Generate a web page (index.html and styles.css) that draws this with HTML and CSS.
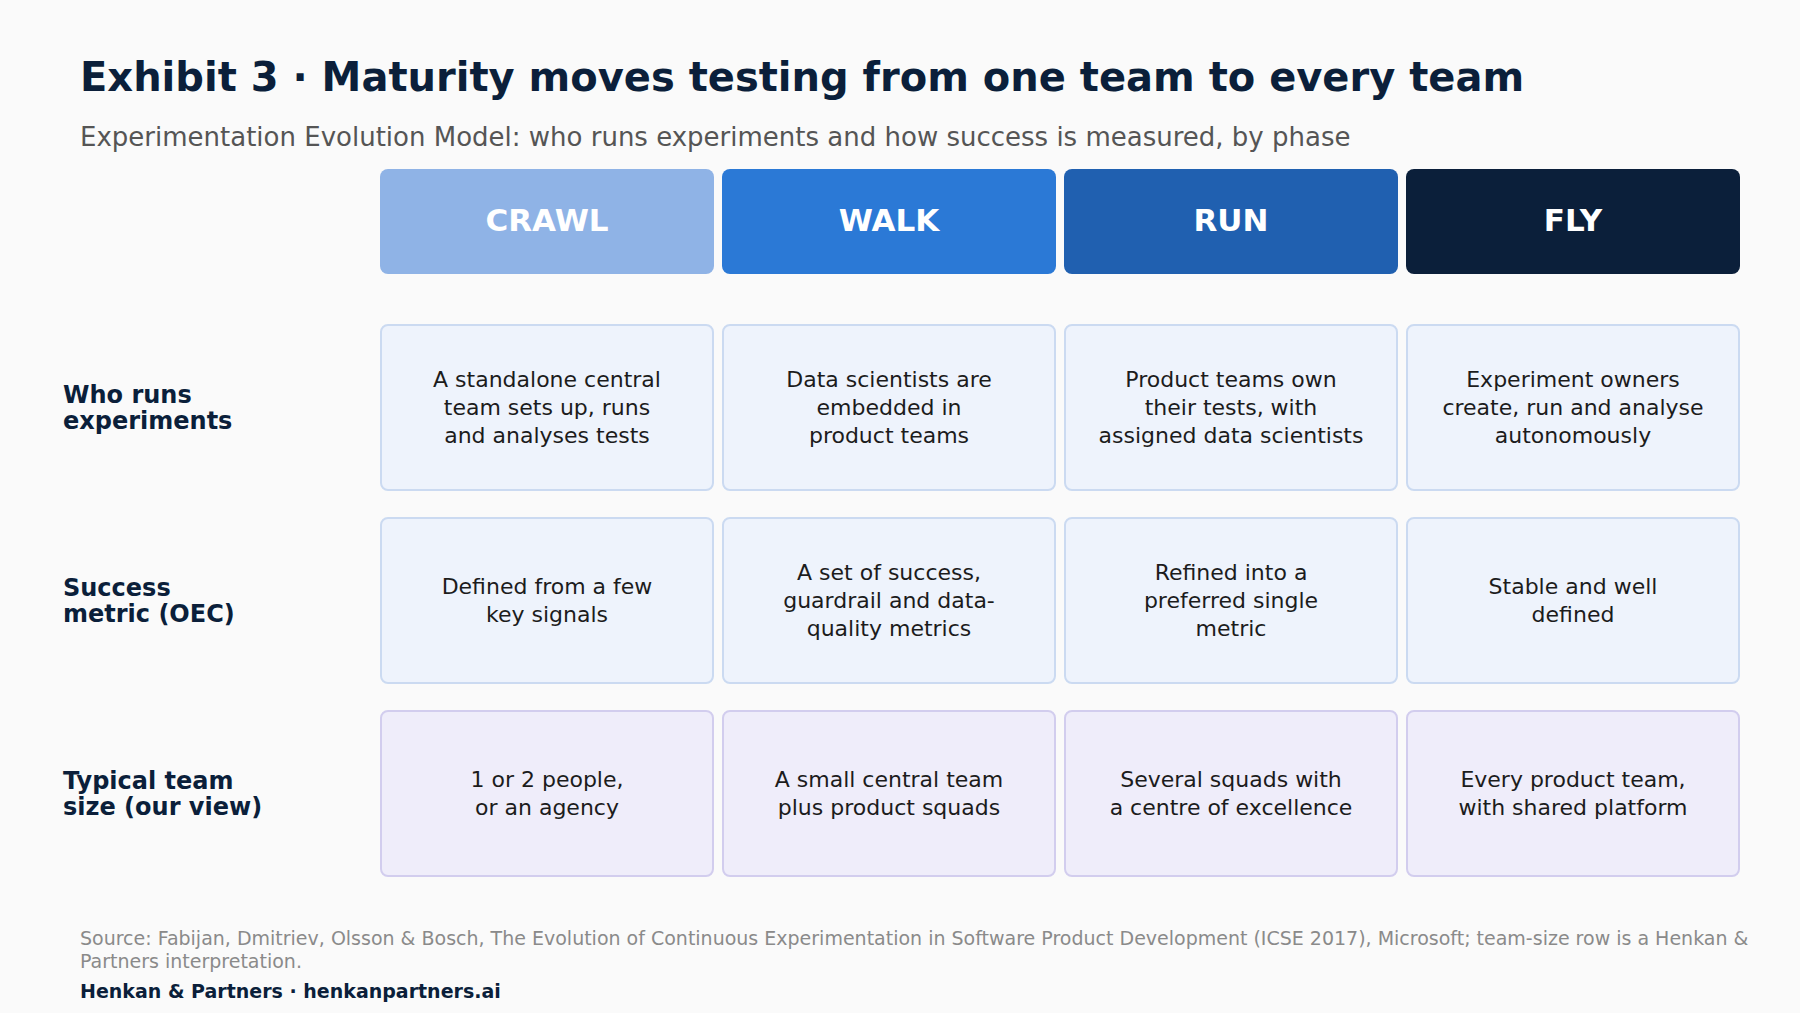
FILE: index.html
```html
<!DOCTYPE html>
<html lang="en">
<head>
    <meta charset="UTF-8">
    <meta name="viewport" content="width=device-width, initial-scale=1.0">
    <link rel="stylesheet" href="styles.css">
</head>
<body>
    <div class="page">
        <h1 class="title">Exhibit 3 · Maturity moves testing from one team to every team</h1>
        <p class="subtitle">Experimentation Evolution Model: who runs experiments and how success is measured, by phase</p>

        <!-- Phase matrix -->
        <div class="matrix">
            <div class="corner"></div>
            <div class="phase crawl">CRAWL</div>
            <div class="phase walk">WALK</div>
            <div class="phase run">RUN</div>
            <div class="phase fly">FLY</div>

            <div class="label">Who runs<br>experiments</div>
            <div class="cell">A standalone central<br>team sets up, runs<br>and analyses tests</div>
            <div class="cell">Data scientists are<br>embedded in<br>product teams</div>
            <div class="cell">Product teams own<br>their tests, with<br>assigned data scientists</div>
            <div class="cell">Experiment owners<br>create, run and analyse<br>autonomously</div>

            <div class="label">Success<br>metric (OEC)</div>
            <div class="cell">Defined from a few<br>key signals</div>
            <div class="cell">A set of success,<br>guardrail and data-<br>quality metrics</div>
            <div class="cell">Refined into a<br>preferred single<br>metric</div>
            <div class="cell">Stable and well<br>defined</div>

            <div class="label">Typical team<br>size (our view)</div>
            <div class="cell team">1 or 2 people,<br>or an agency</div>
            <div class="cell team">A small central team<br>plus product squads</div>
            <div class="cell team">Several squads with<br>a centre of excellence</div>
            <div class="cell team">Every product team,<br>with shared platform</div>
        </div>

        <p class="source">Source: Fabijan, Dmitriev, Olsson &amp; Bosch, The Evolution of Continuous Experimentation in Software Product Development (ICSE 2017), Microsoft; team-size row is a Henkan &amp; Partners interpretation.</p>
        <p class="brand">Henkan &amp; Partners · henkanpartners.ai</p>
    </div>
</body>
</html>
```

FILE: styles.css
```css
body {
    margin: 0;
    background-color: #fafafa;
    font-family: 'DejaVu Sans', sans-serif;
    color: #1c1c1c;
}

.page {
    padding: 53px 44px 0 80px;
}

.title {
    margin: 0;
    font-size: 40px;
    line-height: 48px;
    font-weight: bold;
    color: #0b1f3a;
}

.subtitle {
    margin: 20px 0 0 0;
    font-size: 26px;
    line-height: 32px;
    color: #555555;
}

/* Phase matrix */
.matrix {
    display: grid;
    grid-template-columns: 309px repeat(4, 334px);
    grid-template-rows: 129px repeat(3, 167px);
    column-gap: 8px;
    row-gap: 26px;
    margin: 16px 0 0 -17px;
}

.phase {
    display: flex;
    align-items: center;
    justify-content: center;
    align-self: start;
    box-sizing: border-box;
    height: 105px;
    padding-bottom: 4px;
    border-radius: 8px;
    color: #ffffff;
    font-size: 31px;
    font-weight: bold;
}

.phase.crawl { background-color: #8fb3e6; }
.phase.walk { background-color: #2b79d6; }
.phase.run { background-color: #2060b0; }
.phase.fly { background-color: #0b1f3a; }

.label {
    display: flex;
    align-items: center;
    font-size: 24px;
    line-height: 26px;
    font-weight: bold;
    color: #0b1f3a;
}

.cell {
    display: flex;
    align-items: center;
    justify-content: center;
    text-align: center;
    background-color: #eef3fc;
    border: 2px solid #cbdaf1;
    border-radius: 8px;
    font-size: 22px;
    line-height: 28px;
    color: #1c1c1c;
}

.cell.team {
    background-color: #efedfa;
    border-color: #d2cdee;
}

.source {
    margin: 50px 0 0 0;
    font-size: 19px;
    line-height: 23px;
    color: #8a8a8a;
}

.brand {
    margin: 7px 0 0 0;
    font-size: 19px;
    line-height: 23px;
    font-weight: bold;
    color: #0b1f3a;
}
```
